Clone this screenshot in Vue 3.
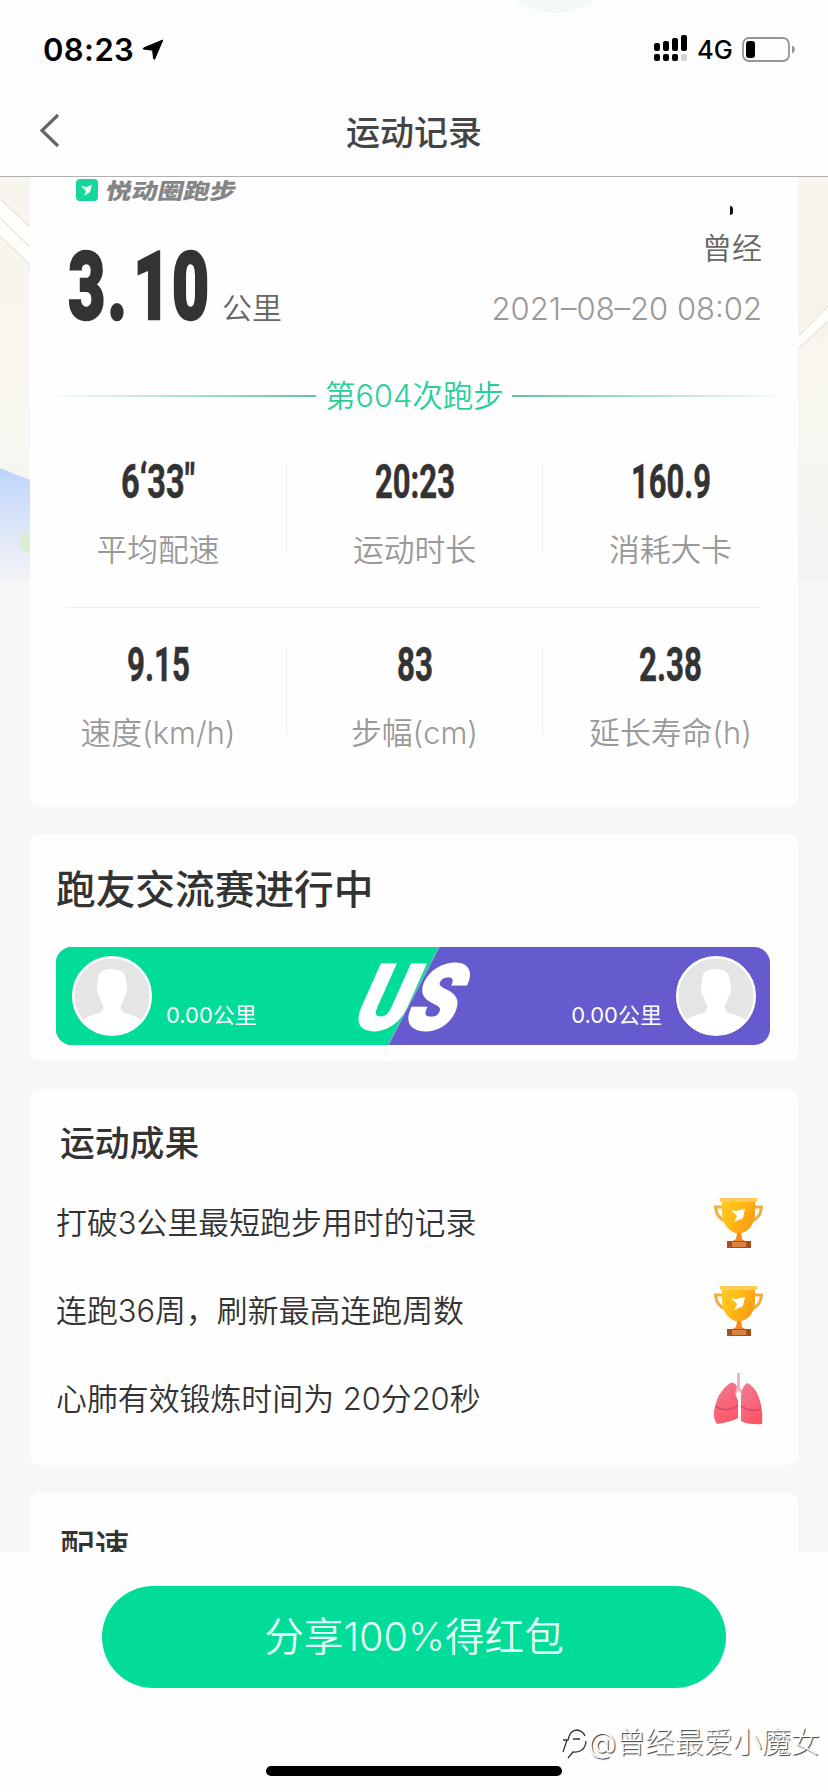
<script setup>
const stats = [
  [
    { value: '6‘33"', label: '平均配速', width: 74 },
    { value: '20:23', label: '运动时长', width: 80 },
    { value: '160.9', label: '消耗大卡', width: 80 },
  ],
  [
    { value: '9.15', label: '速度(km/h)', width: 63 },
    { value: '83', label: '步幅(cm)', width: 36 },
    { value: '2.38', label: '延长寿命(h)', width: 63 },
  ],
]

const achievements = [
  { text: '打破3公里最短跑步用时的记录', icon: 'trophy' },
  { text: '连跑36周，刷新最高连跑周数', icon: 'trophy' },
  { text: '心肺有效锻炼时间为 20分20秒', icon: 'lungs' },
]
</script>

<template>
  <div class="page">
    <header class="header">
      <div class="glow"></div>
      <div class="status">
        <span class="time">08:23</span>
        <svg class="locate" width="22" height="22" viewBox="0 0 22 22">
          <path d="M20.8 1 L1.5 9 Q0.6 9.8 1.8 10.1 L10.6 11.2 L11.6 19.8 Q12 21 12.8 19.8 Z" fill="#000" stroke="#000" stroke-linejoin="round" />
        </svg>
        <svg class="signal" width="34" height="27" viewBox="0 0 34 27">
          <rect x="0" y="8" width="6" height="8" rx="2" />
          <rect x="9" y="6" width="6" height="10" rx="2" />
          <rect x="18" y="3" width="6" height="13" rx="2" />
          <rect x="27" y="0" width="6" height="16" rx="2" />
          <rect x="0" y="19" width="6" height="7" rx="2" />
          <rect x="9" y="19" width="6" height="7" rx="2" />
          <rect x="18" y="19" width="6" height="7" rx="2" />
          <rect x="27" y="19" width="6" height="7" rx="2" fill="#d2d2d2" />
        </svg>
        <span class="net">4G</span>
        <svg class="battery" width="54" height="26" viewBox="0 0 54 26">
          <rect x="1" y="1" width="46" height="23" rx="6" fill="none" stroke="#959595" stroke-width="1.8" />
          <rect x="4" y="4" width="9" height="17" rx="3" fill="#000" />
          <path d="M50 8.5 Q53 10 53 12.5 Q53 15 50 16.5 Z" fill="#959595" />
        </svg>
      </div>
      <div class="nav">
        <svg class="back" width="22" height="36" viewBox="0 0 22 36">
          <path d="M19 2 L3 17.5 L19 33" fill="none" stroke="#666" stroke-width="3.2" />
        </svg>
        <h1>运动记录</h1>
      </div>
    </header>

    <main class="content">
      <svg class="map" width="828" height="404" viewBox="0 0 828 404">
        <defs>
          <linearGradient id="water" x1="0" y1="0" x2="0" y2="1">
            <stop offset="0" stop-color="#bdd4fa" />
            <stop offset="0.5" stop-color="#dbe5f8" />
            <stop offset="1" stop-color="#f4f4f6" />
          </linearGradient>
          <linearGradient id="land" x1="0" y1="0" x2="0" y2="1">
            <stop offset="0" stop-color="#f7f5ee" />
            <stop offset="0.65" stop-color="#f7f6ef" />
            <stop offset="1" stop-color="#f4f4f4" />
          </linearGradient>
        </defs>
        <rect width="828" height="404" fill="url(#land)" />
        <path d="M0 22 L30 50 V70 L0 41 Z" fill="#fffefa" />
        <path d="M0 41 L30 70 V88 L0 59 Z" fill="#fffefb" />
        <path d="M0 22 L30 50 M0 41 L30 70 M0 59 L30 88" stroke="#ddd8bf" fill="none" />
        <path d="M0 291 L30 303 V404 H0 Z" fill="url(#water)" />
        <circle cx="29" cy="366" r="10" fill="#d9edcf" />
        <path d="M798 135 L828 110 V156 L798 170 Z" fill="#faf3ec" />
        <path d="M798 160 L828 129 V144 L798 172 Z" fill="#fffefa" />
        <path d="M798 160 L828 129 M798 172 L828 144" stroke="#dedbd0" fill="none" />
      </svg>

      <section class="card summary">
        <div class="brand">
          <svg width="22" height="22" viewBox="0 0 22 22">
            <rect width="22" height="22" rx="4" fill="#16d69c" />
            <path d="M5 7 L10 8 L16 6 L14 13 L8 17 L10 12 Z" fill="#e8fff7" />
          </svg>
          <span class="brand-name">悦动圈跑步</span>
        </div>
        <i class="speck"></i>
        <div class="headline">
          <div class="distance">
            <svg width="144" height="84" viewBox="0 0 144 84">
              <text transform="translate(0 75) scale(0.68 1)" x="0.5 58 96 153" class="big">3.10</text>
            </svg>
            <span class="unit">公里</span>
          </div>
          <div class="owner">
            <span class="name">曾经</span>
            <span class="date">2021–08–20 08:02</span>
          </div>
        </div>
        <div class="run-count">
          <span class="line left"></span>
          <span class="count">第604次跑步</span>
          <span class="line right"></span>
        </div>
        <div v-for="(row, r) in stats" :key="r" class="stat-row">
          <div v-for="s in row" :key="s.label" class="stat">
            <svg class="value" :width="s.width" height="40">
              <text x="0" y="37" :textLength="s.width" lengthAdjust="spacingAndGlyphs">{{ s.value }}</text>
            </svg>
            <span class="label">{{ s.label }}</span>
          </div>
        </div>
      </section>

      <section class="card match">
        <h2>跑友交流赛进行中</h2>
        <div class="versus">
          <svg class="versus-bg" width="714" height="98" viewBox="0 0 714 98">
            <rect width="714" height="98" fill="#655bce" />
            <path d="M0 0 H383 L332 98 H0 Z" fill="#02dc99" />
            <path d="M383 0 L332 98" stroke="#69b9ba" stroke-width="1.5" />
            <text class="us" transform="translate(293 82) skewX(-24)" textLength="100" lengthAdjust="spacingAndGlyphs">US</text>
          </svg>
          <div v-for="side in 2" :key="side" class="runner">
            <svg class="avatar" width="80" height="80" viewBox="0 0 80 80">
              <circle cx="40" cy="40" r="38.8" fill="#e5e5e5" stroke="#fff" stroke-width="2.4" />
              <path d="M9 65 Q15 60 27 57 Q32 55 31 49 Q28 45 28 41 Q24 37 25 31 L26 22 Q27 14 37 13 Q49 12 53 19 L55 31 Q56 37 52 41 Q51 47 49 49 Q48 55 53 57 Q65 60 71 65 Q60 79 40 79 Q20 79 9 65 Z" fill="#fff" />
            </svg>
            <span>0.00公里</span>
          </div>
        </div>
      </section>

      <section class="card results">
        <h3>运动成果</h3>
        <ul>
          <li v-for="a in achievements" :key="a.text">
            <span>{{ a.text }}</span>
            <svg v-if="a.icon === 'trophy'" width="52" height="54" viewBox="0 0 52 54">
              <defs>
                <linearGradient id="gold" x1="0" y1="0" x2="1" y2="0.5">
                  <stop offset="0" stop-color="#ffd02c" />
                  <stop offset="0.5" stop-color="#ffbb14" />
                  <stop offset="1" stop-color="#fb9a16" />
                </linearGradient>
              </defs>
              <path d="M9 11 H2.5 Q3 22 14 26 M42 11 H48.5 Q48 22 37 26" fill="none" stroke="#f0ae40" stroke-width="3" />
              <path d="M7 2 H44 Q45 5 42 6 V17 Q41 33 29 37 H22 Q10 32 9 17 V6 Q6 5 7 2 Z" fill="url(#gold)" />
              <path d="M7 2 H44 Q45 5 42 6 H9 Q6 5 7 2 Z" fill="#ffc956" />
              <path d="M18 14 L23 15 L32 13 L30 22 L21 26 L24 20 Z" fill="#fff" />
              <path d="M24 37 H28 L29 43 L33 46 H18 L23 43 Z" fill="#f58a20" />
              <rect x="14" y="45" width="24" height="7" fill="#a84e18" />
              <rect x="19" y="46" width="14" height="5" fill="#d98242" />
            </svg>
            <svg v-else width="52" height="54" viewBox="0 0 52 54">
              <defs>
                <linearGradient id="lung" x1="0" y1="0" x2="0.6" y2="1">
                  <stop offset="0" stop-color="#ec7f93" />
                  <stop offset="1" stop-color="#ff5569" />
                </linearGradient>
              </defs>
              <path d="M25.5 1 V16 L21 23 M25.5 16 L30 22" fill="none" stroke="#f3b4c2" stroke-width="3" />
              <path d="M17 11 Q22 10 24 15 L22 21 L25 29 V46 Q17 50 4 52 Q0 47 1 39 Q4 20 17 11 Z" fill="url(#lung)" />
              <path d="M34 11 Q44 15 48 33 Q50 43 49 52 Q36 53 28 49 V24 Q29 14 34 11 Z" fill="url(#lung)" />
              <path d="M2 34 Q12 41 25 34 M28 34 Q39 41 48 37" fill="none" stroke="#cf4763" stroke-width="1.2" />
            </svg>
          </li>
        </ul>
      </section>

      <section class="card pace">
        <h3>配速</h3>
      </section>
    </main>

    <footer class="footer">
      <button class="share">分享100%得红包</button>
      <div class="watermark">
        <svg width="27" height="32" viewBox="0 0 27 32">
          <path d="M2 25 L6 13 M2 13 H7 Q9 3 16 3 Q22 4 24 9 M25 14 Q24 26 12 25 L7 31 M12 12 H19" fill="none" stroke="#333" stroke-width="1.3" />
        </svg>
        <span>@曾经最爱小魔女</span>
      </div>
      <div class="home"></div>
    </footer>
  </div>
</template>

<style>
body {
  margin: 0;
}
</style>

<style scoped>
* {
  box-sizing: border-box;
}
h1, h2, h3, ul {
  margin: 0;
  padding: 0;
}
svg {
  display: block;
  flex: none;
  overflow: visible;
}
.page {
  width: 828px;
  height: 1792px;
  overflow: hidden;
  display: flex;
  flex-direction: column;
  background: #f7f7f7;
  font-family: Inter, "Noto Sans CJK SC", sans-serif;
  color: #333;
}
.header {
  position: relative;
  flex: none;
  height: 177px;
  overflow: hidden;
  background: #fdfdfd;
  border-bottom: 1px solid #b0b0b0;
}
.glow {
  position: absolute;
  left: 505px;
  top: -58px;
  width: 100px;
  height: 71px;
  border-radius: 50%;
  background: #f3f9f7;
}
.status {
  height: 86px;
  padding: 14px 32px 0 43px;
  display: flex;
  align-items: center;
  color: #000;
}
.time {
  width: 91px;
  font-size: 31px;
  font-weight: 600;
  letter-spacing: 0.4px;
  line-height: 40px;
}
.locate {
  margin-left: 8px;
}
.signal {
  margin: -4px 0 0 auto;
}
.net {
  margin-left: 9px;
  width: 36px;
  font-size: 25.5px;
  font-weight: 500;
  line-height: 40px;
}
.battery {
  margin-left: 9px;
}
.nav {
  position: relative;
  height: 90px;
  padding-top: 3px;
  display: flex;
  align-items: center;
  justify-content: center;
}
.back {
  position: absolute;
  left: 39px;
  top: 27px;
}
h1 {
  font-size: 34px;
  font-weight: 500;
  line-height: 50px;
  color: #444;
}
.content {
  position: relative;
  flex: none;
  height: 1375px;
  overflow: hidden;
  padding: 0 30px;
}
.map {
  position: absolute;
  left: 0;
  top: 0;
}
.card {
  position: relative;
  background: #fefefe;
  border-radius: 10px;
}
.summary {
  height: 630px;
  border-radius: 0 0 10px 10px;
}
.brand {
  height: 26px;
  padding: 0 0 0 46px;
  display: flex;
  align-items: center;
}
.brand-name {
  margin-left: 8px;
  font-size: 26px;
  font-weight: 900;
  line-height: 24px;
  color: #858585;
  transform: translateY(1px) skewX(-12deg) scaleY(0.84);
}
.speck {
  position: absolute;
  left: 700px;
  top: 29px;
  width: 3px;
  height: 9px;
  border-radius: 0 3px 3px 0;
  background: #111;
}
.headline {
  height: 120px;
  padding: 0 36px 0 38px;
  display: flex;
  justify-content: space-between;
}
.distance {
  display: flex;
  padding-top: 41px;
}
.big {
  font: 900 94px Roboto, sans-serif;
  fill: #333;
  stroke: #333;
  stroke-width: 2.5px;
}
.unit {
  margin: 42px 0 0 10px;
  font-size: 30px;
  font-weight: 350;
  line-height: 44px;
  height: 44px;
  color: #666;
}
.owner {
  padding-top: 23px;
  display: flex;
  flex-direction: column;
  align-items: flex-end;
  font-weight: 350;
}
.name {
  font-size: 30px;
  line-height: 44px;
  color: #666;
}
.date {
  margin-top: 17px;
  font-size: 31px;
  font-weight: 350;
  line-height: 44px;
  color: #999;
  white-space: nowrap;
}
.run-count {
  height: 44px;
  margin: 51px 0 46px;
  padding: 0 3px 0 10px;
  display: flex;
  align-items: center;
  gap: 9px;
}
.line {
  height: 2px;
}
.left {
  width: 276px;
  background: linear-gradient(90deg, #fff, #61c3a4);
}
.right {
  flex: 1;
  background: linear-gradient(270deg, #fff, #61c3a4);
}
.count {
  width: 178px;
  font-size: 30.6px;
  font-weight: 350;
  line-height: 44px;
  color: #28cf98;
  white-space: nowrap;
}
.stat-row {
  display: grid;
  grid-template-columns: repeat(3, 256px);
  grid-template-rows: 88px;
  height: 88px;
}
.stat-row + .stat-row {
  position: relative;
  margin-top: 95px;
}
.stat-row + .stat-row::before {
  content: "";
  position: absolute;
  left: 36px;
  right: 36px;
  top: -40px;
  height: 1px;
  background: #eee;
}
.stat {
  display: flex;
  flex-direction: column;
  align-items: center;
}
.stat + .stat {
  border-left: 1px solid #eee;
}
.value {
  margin-top: -3px;
  font: 700 48px Roboto, sans-serif;
  fill: #333;
  stroke: #333;
  stroke-width: 0.5px;
}
.label {
  margin-top: 27px;
  font-size: 30.8px;
  font-weight: 350;
  line-height: 44px;
  color: #999;
  white-space: nowrap;
}
.match {
  height: 227px;
  margin-top: 27px;
  padding: 31px 28px 0 26px;
}
h2 {
  height: 82px;
  font-size: 39.7px;
  font-weight: 500;
  line-height: 50px;
}
.versus {
  position: relative;
  height: 98px;
  border-radius: 16px;
  overflow: hidden;
  display: flex;
  justify-content: space-between;
  padding: 9px 14px 9px 16px;
}
.versus-bg {
  position: absolute;
  left: 0;
  top: 0;
}
.us {
  font: 900 90px Roboto, sans-serif;
  fill: #fff;
  stroke: #fff;
  stroke-width: 3px;
}
.runner {
  position: relative;
  display: flex;
  gap: 14px;
  color: #fff;
  font-size: 22px;
  line-height: 30px;
}
.runner span {
  margin-top: 44px;
}
.runner + .runner {
  flex-direction: row-reverse;
}
.results {
  height: 376px;
  margin-top: 28px;
  padding: 29px 33px 0 26px;
}
h3 {
  font-size: 34.8px;
  font-weight: 500;
  line-height: 50px;
  padding-left: 4px;
}
ul {
  list-style: none;
  margin-top: 11px;
}
li {
  height: 88px;
  display: flex;
  align-items: center;
  justify-content: space-between;
  font-size: 30.9px;
  font-weight: 350;
  white-space: nowrap;
}
li span {
  line-height: 44px;
}
.pace {
  height: 300px;
  margin-top: 28px;
  padding: 29px 26px;
}
.footer {
  position: relative;
  flex: none;
  height: 240px;
  padding-top: 34px;
  background: #fefefe;
}
.share {
  display: block;
  width: 624px;
  height: 102px;
  margin: 0 auto;
  padding: 0;
  border: 0;
  border-radius: 51px;
  background: #02dc99;
  color: #e4fff5;
  font: 350 39.6px/102px Inter, "Noto Sans CJK SC", sans-serif;
}
.watermark {
  position: absolute;
  left: 561px;
  top: 171px;
  display: flex;
  align-items: center;
  font-size: 29.1px;
  font-weight: 300;
  line-height: 40px;
  color: #fff;
  text-shadow: 1px 1px 1px #333;
  white-space: nowrap;
}
.home {
  width: 296px;
  height: 10px;
  margin: 78px auto 0;
  border-radius: 5px;
  background: #000;
}
</style>
